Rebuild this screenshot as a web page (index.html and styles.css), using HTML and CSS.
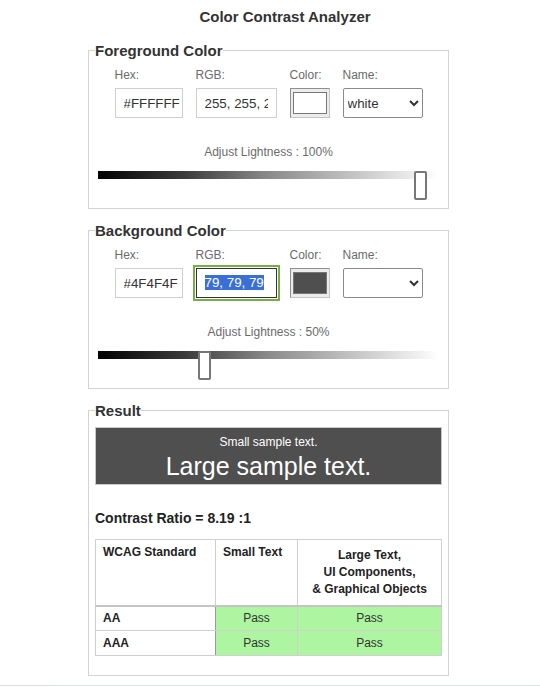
FILE: index.html
```html
<!DOCTYPE html>
<html lang="en">
<head>
<meta charset="utf-8">
<title>Color Contrast Analyzer</title>
<link rel="stylesheet" href="styles.css">
</head>
<body>
<h1 class="title">Color Contrast Analyzer</h1>
<main class="app">
  <fieldset class="panel">
    <legend class="panel-title">Foreground Color</legend>
    <div class="fields">
      <label class="field">
        <span class="field-label">Hex:</span>
        <input class="text-input hex" type="text" value="#FFFFFF" readonly>
      </label>
      <label class="field">
        <span class="field-label">RGB:</span>
        <input class="text-input rgb" type="text" value="255, 255, 255" readonly>
      </label>
      <div class="field">
        <span class="field-label">Color:</span>
        <div class="swatch"><div class="swatch-fill swatch-white"></div></div>
      </div>
      <label class="field">
        <span class="field-label">Name:</span>
        <select class="name-select"><option selected>white</option></select>
      </label>
    </div>
    <div class="lightness">Adjust Lightness : 100%</div>
    <div class="slider">
      <div class="slider-track"></div>
      <div class="slider-thumb" style="left: 316px"></div>
    </div>
  </fieldset>

  <fieldset class="panel">
    <legend class="panel-title">Background Color</legend>
    <div class="fields">
      <label class="field">
        <span class="field-label">Hex:</span>
        <input class="text-input hex" type="text" value="#4F4F4F" readonly>
      </label>
      <div class="field">
        <span class="field-label">RGB:</span>
        <div class="text-input rgb is-focused"><span class="selected-text">79, 79, 79</span></div>
      </div>
      <div class="field">
        <span class="field-label">Color:</span>
        <div class="swatch"><div class="swatch-fill swatch-dark"></div></div>
      </div>
      <label class="field">
        <span class="field-label">Name:</span>
        <select class="name-select"><option selected></option></select>
      </label>
    </div>
    <div class="lightness">Adjust Lightness : 50%</div>
    <div class="slider">
      <div class="slider-track"></div>
      <div class="slider-thumb" style="left: 100px"></div>
    </div>
  </fieldset>

  <fieldset class="panel">
    <legend class="panel-title">Result</legend>
    <div class="sample">
      <div class="sample-small">Small sample text.</div>
      <div class="sample-large">Large sample text.</div>
    </div>
    <div class="ratio">Contrast Ratio = 8.19 :1</div>
    <table class="wcag">
      <colgroup>
        <col class="col-standard">
        <col class="col-small">
        <col>
      </colgroup>
      <thead>
        <tr>
          <th>WCAG Standard</th>
          <th>Small Text</th>
          <th class="th-center">Large Text,<br>UI Components,<br>&amp; Graphical Objects</th>
        </tr>
      </thead>
      <tbody>
        <tr>
          <td class="level">AA</td>
          <td class="pass">Pass</td>
          <td class="pass">Pass</td>
        </tr>
        <tr>
          <td class="level">AAA</td>
          <td class="pass">Pass</td>
          <td class="pass">Pass</td>
        </tr>
      </tbody>
    </table>
  </fieldset>
</main>
<div class="page-footer"></div>
</body>
</html>
```

FILE: styles.css
```css
* {
  box-sizing: border-box;
}

html, body {
  margin: 0;
  background: #fff;
}

body {
  font-family: "Liberation Sans", Arial, sans-serif;
  color: #333;
}

.title {
  margin: 8px 0 17px;
  padding-left: 30px;
  text-align: center;
  font-size: 15px;
  line-height: 17px;
  font-weight: bold;
  color: #333;
}

.app {
  width: 361px;
  margin-left: 88px;
}

.panel {
  margin: 0 0 13px;
  padding: 8px 6px 7px;
  border: 1px solid #d3d3d3;
  min-width: 0;
}

.panel:last-child {
  margin-bottom: 0;
  padding-bottom: 19px;
}

.panel-title {
  padding: 0;
  font-size: 15px;
  line-height: 17px;
  font-weight: bold;
  color: #333;
}

.fields {
  display: flex;
  justify-content: center;
  gap: 13px;
  margin-top: 1px;
}

.field {
  display: flex;
  flex-direction: column;
  gap: 6px;
}

.field-label {
  font-size: 12px;
  line-height: 14px;
  color: #6b6b6b;
}

.text-input {
  display: block;
  height: 30px;
  margin: 0;
  padding: 0 8px;
  border: 1px solid #cfcfcf;
  background: #fff;
  font: 13.333px "Liberation Sans", Arial, sans-serif;
  line-height: 28px;
  color: #333;
  overflow: hidden;
  white-space: nowrap;
  outline: none;
}

.hex {
  width: 68px;
  padding-right: 0;
}

.rgb {
  width: 81px;
}

.is-focused {
  border-color: #333;
  outline: 2px solid #76b043;
  outline-offset: 1px;
}

.selected-text {
  background: #3a6fd8;
  color: #fff;
}

.swatch {
  width: 40px;
  height: 30px;
  padding: 3px 2px;
  border: 1px solid;
  border-color: #8f8f8f #c4c4c4 #c4c4c4 #8f8f8f;
  background: #ececec;
}

.swatch-fill {
  height: 100%;
  border: 1px solid #777;
}

.swatch-white {
  background: #fff;
}

.swatch-dark {
  background: #4f4f4f;
}

.name-select {
  display: block;
  width: 80px;
  height: 30px;
  margin: 0;
  padding: 0;
  border: 1px solid #8a8a8a;
  border-radius: 2px;
  background-color: #fff;
  font: 13.333px "Liberation Sans", Arial, sans-serif;
  color: #333;
}

.lightness {
  margin-top: 27px;
  text-align: center;
  font-size: 12px;
  line-height: 14px;
  color: #6b6b6b;
}

.slider {
  position: relative;
  width: 340px;
  height: 30px;
  margin: 9px 0 0 3px;
}

.slider-track {
  margin-top: 12px;
  height: 8px;
  background: linear-gradient(to right, #000 0%, #3a3a3a 25%, #8a8a8a 50%, #cfcfcf 80%, #f2f2f2 95%, #fff 100%);
}

.slider-thumb {
  position: absolute;
  top: 0;
  width: 13px;
  height: 29px;
  border: 2px solid #777;
  border-radius: 2px;
  background: #fff;
}

.sample {
  padding: 7px 0 3px;
  border: 1px solid #c8c8c8;
  background: #4f4f4f;
  color: #fff;
  text-align: center;
}

.sample-small {
  margin-bottom: 3px;
  font-size: 12px;
  line-height: 14px;
}

.sample-large {
  font-size: 25px;
  line-height: 29px;
}

.ratio {
  margin: 25px 0 13px;
  font-size: 14px;
  line-height: 16px;
  font-weight: bold;
  color: #222;
}

.wcag {
  width: 100%;
  border-collapse: collapse;
  table-layout: fixed;
  font-size: 12px;
  line-height: 17px;
  color: #222;
}

.col-standard {
  width: 120px;
}

.col-small {
  width: 82px;
}

.wcag th,
.wcag td {
  border: 1px solid #cfcfcf;
}

.wcag th {
  height: 66px;
  padding: 4px 7px;
    vertical-align: top;
  text-align: left;
  font-weight: bold;
}

.wcag th.th-center {
  padding-top: 7px;
  text-align: center;
}

.wcag thead tr {
  border-bottom: 2px solid #c4c4c4;
}

.wcag td {
  height: 25px;
  padding: 0 7px;
}

.level {
  font-weight: bold;
  border-right-color: #999 !important;
}

.pass {
  background: #adf5a0;
  text-align: center;
  color: #333;
}

.page-footer {
  margin-top: 9px;
  height: 1px;
  background: linear-gradient(to right, #dcdcdc 50px, #d4eaf1 50px);
}
```
